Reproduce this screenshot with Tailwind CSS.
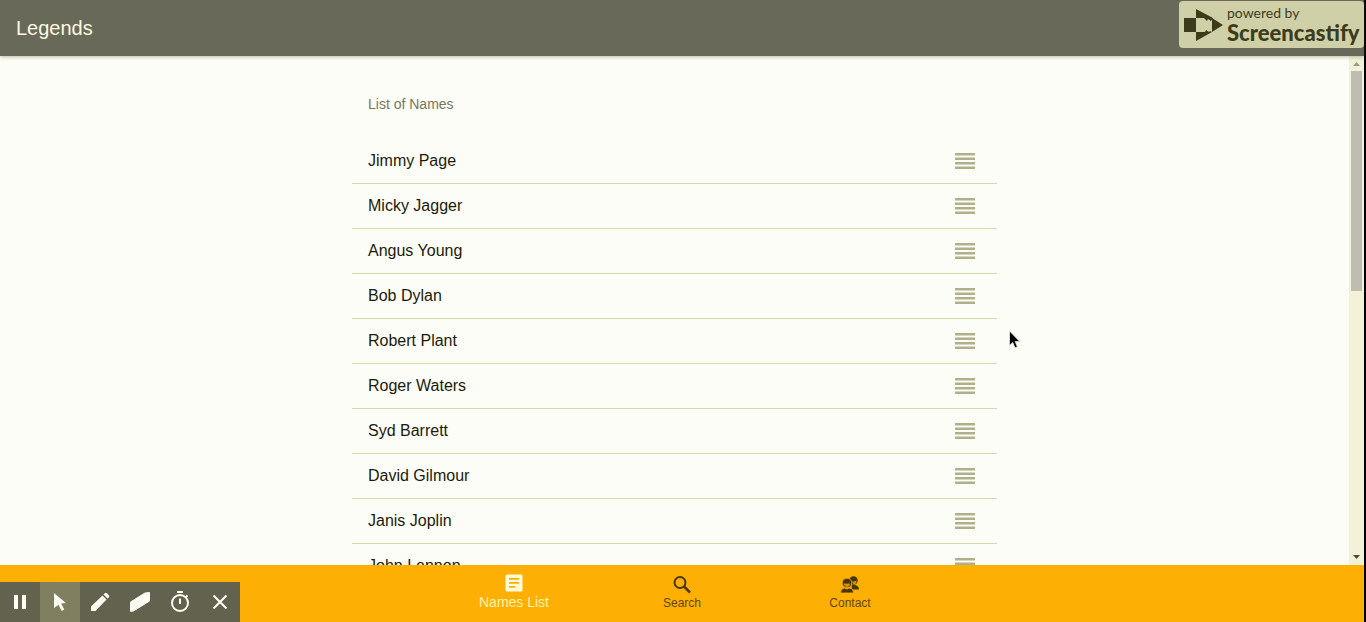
<!DOCTYPE html>
<html lang="en">
<head>
<meta charset="utf-8">
<meta name="viewport" content="width=device-width, initial-scale=1">
<title>Legends</title>
<script src="https://cdn.jsdelivr.net/npm/@tailwindcss/browser@4"></script>
</head>
<body class="h-screen overflow-hidden bg-black pr-0.5 font-['Liberation_Sans',Arial,sans-serif]">
<div class="relative flex h-full flex-col bg-[#fdfdf7]">
  <header class="relative z-10 flex h-14 shrink-0 items-center bg-[#69695a] px-4 shadow-[0_1px_4px_rgba(90,90,40,0.4)]">
    <h1 class="text-xl text-[#fbfbe0]">Legends</h1>
  </header>

  <div class="flex min-h-0 flex-1">
    <main class="min-w-0 flex-1 overflow-hidden pt-6">
      <section class="mx-auto max-w-[645px]">
        <h2 class="mb-[11px] px-4 text-sm leading-12 text-[#77775c]">List of Names</h2>
        <ul id="names" class="text-base text-[#1b1b0c]"></ul>
      </section>
    </main>
    <div class="flex w-[15px] shrink-0 flex-col items-center bg-[#f2f2d8]" aria-hidden="true">
      <svg class="h-[15px] w-[15px] shrink-0" viewBox="0 0 15 15"><path d="M4 10h7L7.500 6z" fill="#9a9a8c"/></svg>
      <div class="h-[220px] w-[11px] bg-[#bebeb0]"></div>
      <svg class="mt-auto h-[15px] w-[15px] shrink-0" viewBox="0 0 15 15"><path d="M4 5h7L7.500 9z" fill="#4b4b38"/></svg>
    </div>
  </div>

  <nav class="flex h-[57px] shrink-0 justify-center bg-[#fdb003] text-xs leading-4 text-[#5f4706]">
    <a href="#names" class="flex w-[168px] flex-col items-center pt-2 text-sm leading-4 text-[#fff3a8]" aria-current="page">
      <svg class="h-5 w-5" viewBox="0 0 20 20"><path fill="#fffbd8" fill-rule="evenodd" d="M3 1.500h14A1.500 1.500 0 0 1 18.500 3v14a1.500 1.500 0 0 1-1.500 1.500H3A1.500 1.500 0 0 1 1.500 17V3A1.500 1.500 0 0 1 3 1.500zM5 5v1.800h10V5zM5 9v1.800h10V9zM5 13v1.800h6V13z"/></svg>
      <span class="pt-px">Names List</span>
    </a>
    <a href="#search" class="flex w-[168px] flex-col items-center pt-2.5">
      <svg class="h-5 w-5" viewBox="0 0 20 20" fill="none" stroke="#493604" stroke-width="2"><circle cx="8" cy="7.500" r="5.500"/><path d="M12 11.500l6 6" stroke-width="2.500"/></svg>
      <span>Search</span>
    </a>
    <a href="#contact" class="flex w-[168px] flex-col items-center pt-2.5">
      <svg class="h-5 w-5" viewBox="0 0 20 20" fill="#493604"><circle cx="13.500" cy="5.500" r="4.200"/><path d="M11.500 10h4c2 .8 3.500 2 3.500 4.500h-7z"/><path d="M12 6.500c1.500.2 3.500-.2 4.500-1 .2 3-1.500 4-3 4z" fill="#d2950a"/><g stroke="#fdb003" stroke-width=".8"><circle cx="7" cy="8" r="4.800"/><path d="M.5 18c0-3.200 2-4.500 4-5l2.500 1 2.500-1c2.500.5 4 1.800 4 5z"/></g><path d="M4 8.500c2.200.2 4.600.2 6 0 0 4.500-6 4.500-6 0z" fill="#d2950a"/></svg>
      <span>Contact</span>
    </a>
  </nav>

  <div class="absolute top-px right-0 z-20 flex h-[47px] w-[185px] items-center gap-1 rounded bg-[#d0d0a8] pl-1 text-[#3c3c1c]">
    <svg class="h-8 w-10 shrink-0" viewBox="0 0 40 32" fill="currentColor"><path d="M1 9h12v14H1zM13 0l17 9-2 3-3-2-1 2-3-3h-8zM13 32v-9h9l1-2 3 2 1-1 2 1zM29 9l11 7-11 7z"/></svg>
    <p class="font-[Lato,sans-serif] whitespace-nowrap"><span class="block text-sm leading-4">powered by</span><span class="block text-[22px] leading-6 font-black">Screencastify</span></p>
  </div>

  <div class="absolute bottom-0 left-0 z-20 flex h-10 text-[#fdfdf4]" role="toolbar" aria-label="Recording tools">
    <button class="flex w-10 items-center justify-center bg-[#62624f]" aria-label="Pause"><svg class="h-6 w-6" viewBox="0 0 24 24" fill="currentColor"><path d="M6 5h4v14H6zM14 5h4v14h-4z"/></svg></button>
    <button class="flex w-10 items-center justify-center bg-[#808060]" aria-label="Pointer"><svg class="h-6 w-6" viewBox="0 0 24 24" fill="currentColor"><path d="M6 3l12 10-5 .6 3.300 6-2.600 1.400-3.200-6.200L6 18z"/></svg></button>
    <button class="flex w-10 items-center justify-center bg-[#62624f]" aria-label="Pen"><svg class="h-6 w-6" viewBox="0 0 24 24" fill="currentColor"><path d="M3 21v-4.500L14.500 5.500l4 4L7.500 21zM15.500 4.500l1.300-1.200a1.500 1.500 0 0 1 2.100 0l2 2a1.500 1.500 0 0 1 0 2.100l-1.400 1.200z"/></svg></button>
    <button class="flex w-10 items-center justify-center bg-[#62624f]" aria-label="Eraser"><svg class="h-6 w-6" viewBox="0 0 24 24" fill="currentColor" stroke="currentColor" stroke-linejoin="round"><path d="M2.500 12L17 3l4.500-.5V11L5.500 21l-3 .3z"/></svg></button>
    <button class="flex w-10 items-center justify-center bg-[#62624f]" aria-label="Timer"><svg class="h-6 w-6" viewBox="0 0 24 24" fill="none" stroke="currentColor" stroke-width="2"><circle cx="12" cy="13" r="8"/><path d="M9 2h6M12 8.500V14M17.500 7.500l2-2"/></svg></button>
    <button class="flex w-10 items-center justify-center bg-[#62624f]" aria-label="Close"><svg class="h-6 w-6" viewBox="0 0 24 24" fill="none" stroke="currentColor" stroke-width="2"><path d="M5.500 5.500l13 13M18.500 5.500l-13 13"/></svg></button>
  </div>

  <svg class="absolute top-[330px] left-[1009px] z-20 h-5 w-3" viewBox="0 0 12 20" aria-hidden="true"><path d="M.5 1v14.500l3.300-3 2.200 5.300 2.400-1-2.200-5.200h4.600z" fill="#000" stroke="#e8e8dc" stroke-width=".8"/></svg>
</div>
<script>
  const names = ['Jimmy Page', 'Micky Jagger', 'Angus Young', 'Bob Dylan', 'Robert Plant', 'Roger Waters', 'Syd Barrett', 'David Gilmour', 'Janis Joplin', 'John Lennon'];
  document.getElementById('names').innerHTML = names.map(name => `
    <li class="flex h-[45px] items-center justify-between border-b border-[#dadaa8] pr-5 pl-4">
      <span>${name}</span>
      <button aria-label="Reorder ${name}">
        <svg class="h-6 w-6" viewBox="0 0 24 24" fill="#b0b08c"><path d="M2 4h20v2.500H2zM2 8.500h20V11H2zM2 13h20v2.500H2zM2 17.500h20V20H2z"/></svg>
      </button>
    </li>`).join('');
</script>
</body>
</html>
